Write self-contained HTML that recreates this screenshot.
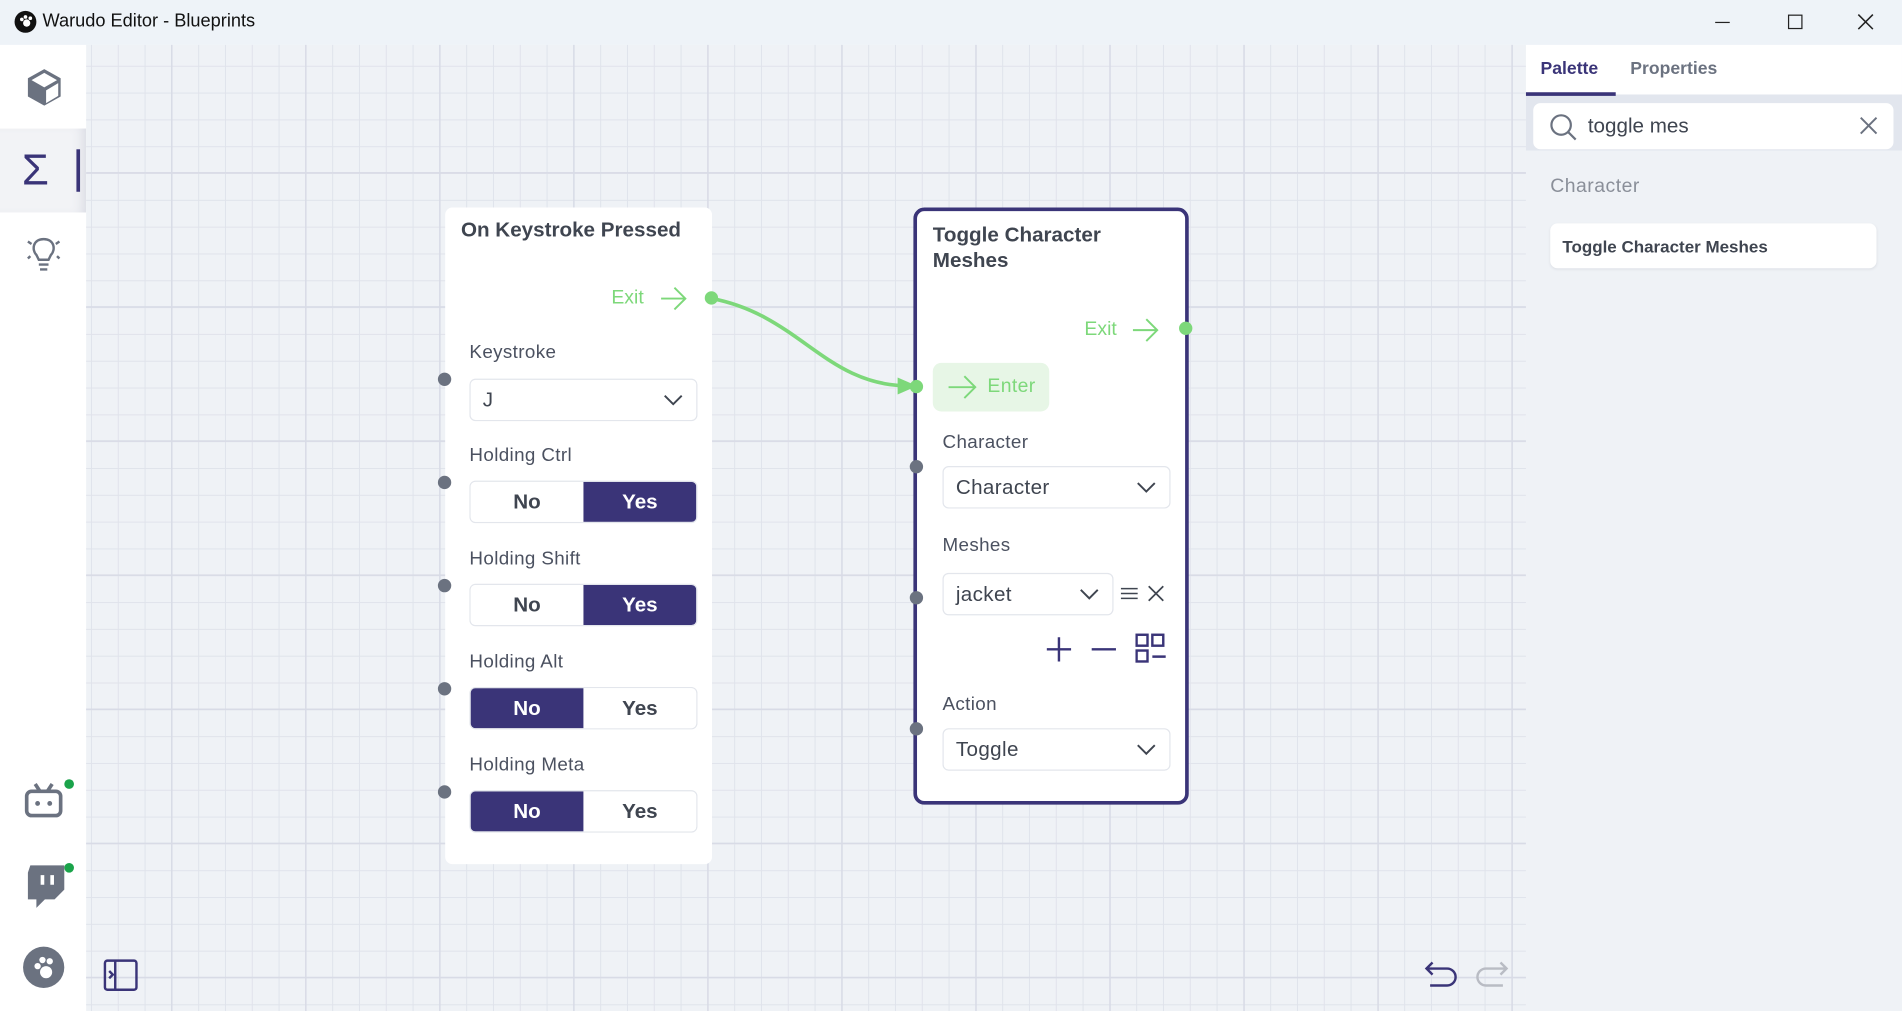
<!DOCTYPE html>
<html><head><meta charset="utf-8"><style>
*{box-sizing:border-box;margin:0;padding:0}
html,body{width:1902px;height:1011px;overflow:hidden;background:#fff}
#w{position:absolute;left:0;top:0;width:1568px;height:833px;transform:scale(1.2130,1.2137);transform-origin:0 0;font-family:"Liberation Sans",sans-serif;color:#3f4550}
.a{position:absolute}
#title{left:0;top:0;width:1568px;height:37px;background:#eef3f8}
#side{left:0;top:37px;width:71px;height:796px;background:#fff}
#canvas{left:71px;top:37px;width:1187px;height:796px;background-color:#eff2f6;
background-image:linear-gradient(90deg,#d8dbe6 1.2px,transparent 1.2px),linear-gradient(0deg,#d8dbe6 1.2px,transparent 1.2px),linear-gradient(90deg,#e0e3eb 1px,transparent 1px),linear-gradient(0deg,#e0e3eb 1px,transparent 1px);
background-size:110.5px 110.5px,110.5px 110.5px,22.1px 22.1px,22.1px 22.1px;background-position:70px 106px,70px 106px,4px 18px,4px 18px}
#panel{left:1258px;top:37px;width:310px;height:796px;background:#eff2f6}
.node{background:#fff;border-radius:6px}
.lbl{font-size:15.5px;color:#4b5160;letter-spacing:.3px}
.dd{background:#fff;border:1px solid #e3e6ec;border-radius:5px;font-size:17px;color:#3f4550;padding-left:10px;display:flex;align-items:center;letter-spacing:.3px}
.tg{display:flex;border:1px solid #e3e6ec;border-radius:5px;overflow:hidden;width:188px;height:35px}
.tg div{flex:1;display:flex;align-items:center;justify-content:center;font-weight:bold;font-size:17px;color:#3f4550;background:#fff}
.tg .on{background:#3a3478;color:#fff}
.dot{width:11px;height:11px;border-radius:50%;background:#6b7280}
.gdot{background:#7dd87a}
.green{color:#7dd87a}
</style></head><body><div id="w">
<div class="a" id="title">
<svg class="a" style="left:11px;top:8px" width="20" height="20" viewBox="0 0 20 20"><circle cx="10" cy="10" r="9" fill="#111"/><circle cx="11" cy="11" r="3" fill="#fff"/><circle cx="7" cy="8" r="1.5" fill="#fff"/><circle cx="10" cy="6" r="1.5" fill="#fff"/><circle cx="14" cy="7" r="1.5" fill="#fff"/></svg>
<div class="a" style="left:35px;top:9px;font-size:15px;color:#111">Warudo Editor - Blueprints</div>
<div class="a" style="left:1414px;top:18px;width:12px;height:1px;background:#222"></div>
<div class="a" style="left:1474px;top:12px;width:12px;height:12px;border:1.3px solid #222"></div>
<svg class="a" style="left:1531px;top:11px" width="14" height="14"><path d="M1 1L13 13M13 1L1 13" stroke="#222" stroke-width="1.3"/></svg>
</div>
<div class="a" id="side">
<svg class="a" style="left:21px;top:18px" width="31" height="34" viewBox="0 0 31 34"><path d="M15.5 2L29 9.5V24.5L15.5 32L2 24.5V9.5Z" fill="#6b7280"/><path d="M15.5 5L26 11L15.5 17L5 11Z M17 19.5L27 13.5V24L17 30Z" fill="#fff"/></svg>
<div class="a" style="left:0;top:69px;width:71px;height:69px;background:#f2f3f6;box-shadow:inset -8px 0 10px -6px #d5d7e0"></div>
<div class="a" style="left:18px;top:83px;font-size:36px;color:#3a3478;line-height:40px">Σ</div>
<div class="a" style="left:63px;top:86px;width:3px;height:35px;background:#3a3478"></div>
<svg class="a" style="left:20px;top:154px" width="32" height="34" viewBox="0 0 32 34"><path d="M10 19C6 15 7 6 16 6S26 15 22 19L20 23H12Z" fill="none" stroke="#6b7280" stroke-width="2"/><path d="M12 27H20M13 31H19M3 8L6 10M29 8L26 10M3 22L5 20M29 22L27 20" stroke="#6b7280" stroke-width="2"/></svg>
<svg class="a" style="left:20px;top:607px" width="34" height="30" viewBox="0 0 34 30"><rect x="2" y="8" width="28" height="20" rx="4" fill="none" stroke="#6b7280" stroke-width="3"/><path d="M9 2L13 8M23 2L19 8" stroke="#6b7280" stroke-width="3"/><circle cx="11" cy="18" r="2" fill="#6b7280"/><circle cx="21" cy="18" r="2" fill="#6b7280"/></svg>
<div class="a" style="left:53px;top:605px;width:8px;height:8px;border-radius:50%;background:#1aa34a"></div>
<svg class="a" style="left:21px;top:674px" width="34" height="40" viewBox="0 0 34 40"><path d="M4 2H32V22L24 30H16L9 37V30H2V8Z" fill="#6b7280"/><path d="M14 10V18M22 10V18" stroke="#fff" stroke-width="3"/></svg>
<div class="a" style="left:53px;top:674px;width:8px;height:8px;border-radius:50%;background:#1aa34a"></div>
<svg class="a" style="left:18px;top:742px" width="36" height="36" viewBox="0 0 36 36"><circle cx="18" cy="18" r="17" fill="#6b7280"/><circle cx="20" cy="22" r="5" fill="#fff"/><circle cx="13" cy="17" r="2.6" fill="#fff"/><circle cx="17" cy="12" r="2.6" fill="#fff"/><circle cx="23" cy="13" r="2.6" fill="#fff"/></svg>
</div>
<div class="a" id="canvas"></div>
<svg class="a" style="left:85px;top:790px" width="30" height="28" viewBox="0 0 30 28"><rect x="1.5" y="1.5" width="26" height="24" rx="2" fill="none" stroke="#3a3478" stroke-width="2"/><path d="M10 2V26M5 10L8 13L5 16" fill="none" stroke="#3a3478" stroke-width="2"/></svg>
<svg class="a" style="left:1173px;top:790px" width="30" height="26" viewBox="0 0 30 26"><path d="M8 3L3 8L8 13M3 8H20A6 6 0 0 1 20 22H6" fill="none" stroke="#3a3478" stroke-width="2"/></svg>
<svg class="a" style="left:1215px;top:790px" width="30" height="26" viewBox="0 0 30 26"><path d="M22 3L27 8L22 13M27 8H10A6 6 0 0 0 10 22H24" fill="none" stroke="#b9bcc4" stroke-width="2"/></svg>

<svg class="a" style="left:0;top:0" width="1258" height="833"><path d="M587 246C660 260 680 318 750 318" fill="none" stroke="#7dd87a" stroke-width="3"/><path d="M740 311L756 318L740 325Z" fill="#7dd87a"/></svg>

<div class="a node" style="left:367px;top:171px;width:220px;height:541px">
<div class="a" style="left:13px;top:9px;font-size:17px;font-weight:bold;color:#3f4550">On Keystroke Pressed</div>
<div class="a green" style="left:137px;top:66px;font-size:16px">Exit</div>
<svg class="a" style="left:176px;top:64px" width="24" height="22"><path d="M2 11H22M13 2L22 11L13 20" fill="none" stroke="#7dd87a" stroke-width="1.6"/></svg>
<div class="a lbl" style="left:20px;top:111px">Keystroke</div>
<div class="a dd" style="left:20px;top:141px;width:188px;height:35px">J<svg class="a" style="right:10px;top:11px" width="18" height="12"><path d="M2 2L9 9L16 2" fill="none" stroke="#3f4550" stroke-width="1.6"/></svg></div>
<div class="a lbl" style="left:20px;top:196px">Holding Ctrl</div>
<div class="a tg" style="left:20px;top:225px"><div>No</div><div class="on">Yes</div></div>
<div class="a lbl" style="left:20px;top:281px">Holding Shift</div>
<div class="a tg" style="left:20px;top:310px"><div>No</div><div class="on">Yes</div></div>
<div class="a lbl" style="left:20px;top:366px">Holding Alt</div>
<div class="a tg" style="left:20px;top:395px"><div class="on">No</div><div>Yes</div></div>
<div class="a lbl" style="left:20px;top:451px">Holding Meta</div>
<div class="a tg" style="left:20px;top:480px"><div class="on">No</div><div>Yes</div></div>
</div>
<div class="a dot gdot" style="left:581px;top:240px"></div>
<div class="a dot" style="left:361px;top:307px"></div>
<div class="a dot" style="left:361px;top:392px"></div>
<div class="a dot" style="left:361px;top:477px"></div>
<div class="a dot" style="left:361px;top:562px"></div>
<div class="a dot" style="left:361px;top:647px"></div>

<div class="a node" style="left:753px;top:171px;width:227px;height:492px;border:3px solid #3a3478;border-radius:9px">
<div class="a" style="left:13px;top:9px;font-size:17px;font-weight:bold;color:#3f4550;line-height:21px">Toggle Character<br>Meshes</div>
<div class="a green" style="left:138px;top:89px;font-size:16px">Exit</div>
<svg class="a" style="left:176px;top:87px" width="24" height="22"><path d="M2 11H22M13 2L22 11L13 20" fill="none" stroke="#7dd87a" stroke-width="1.6"/></svg>
<div class="a" style="left:13px;top:125px;width:96px;height:40px;background:#e7f6e6;border-radius:7px"></div>
<svg class="a" style="left:24px;top:134px" width="26" height="22"><path d="M2 11H24M15 2L24 11L15 20" fill="none" stroke="#7dd87a" stroke-width="1.6"/></svg>
<div class="a green" style="left:58px;top:136px;font-size:16px;letter-spacing:.3px">Enter</div>
<div class="a lbl" style="left:21px;top:182px">Character</div>
<div class="a dd" style="left:21px;top:210px;width:188px;height:35px">Character<svg class="a" style="right:10px;top:11px" width="18" height="12"><path d="M2 2L9 9L16 2" fill="none" stroke="#3f4550" stroke-width="1.6"/></svg></div>
<div class="a lbl" style="left:21px;top:267px">Meshes</div>
<div class="a dd" style="left:21px;top:298px;width:141px;height:35px">jacket<svg class="a" style="right:10px;top:11px" width="18" height="12"><path d="M2 2L9 9L16 2" fill="none" stroke="#3f4550" stroke-width="1.6"/></svg></div>
<svg class="a" style="left:168px;top:308px" width="14" height="14"><path d="M0 3H14M0 7H14M0 11H14" stroke="#3f4550" stroke-width="1.2"/></svg>
<svg class="a" style="left:190px;top:308px" width="14" height="14"><path d="M1 1L13 13M13 1L1 13" stroke="#3f4550" stroke-width="1.4"/></svg>
<svg class="a" style="left:106px;top:350px" width="22" height="22"><path d="M11 1V21M1 11H21" stroke="#3a3478" stroke-width="2"/></svg>
<svg class="a" style="left:143px;top:350px" width="22" height="22"><path d="M1 11H21" stroke="#3a3478" stroke-width="2"/></svg>
<svg class="a" style="left:180px;top:348px" width="26" height="26"><rect x="1" y="1" width="9" height="9" fill="none" stroke="#3a3478" stroke-width="2"/><rect x="14" y="1" width="9" height="9" fill="none" stroke="#3a3478" stroke-width="2"/><rect x="1" y="14" width="9" height="9" fill="none" stroke="#3a3478" stroke-width="2"/><path d="M14 19H25" stroke="#3a3478" stroke-width="2"/></svg>
<div class="a lbl" style="left:21px;top:398px">Action</div>
<div class="a dd" style="left:21px;top:426px;width:188px;height:35px">Toggle<svg class="a" style="right:10px;top:11px" width="18" height="12"><path d="M2 2L9 9L16 2" fill="none" stroke="#3f4550" stroke-width="1.6"/></svg></div>
</div>
<div class="a dot gdot" style="left:972px;top:265px"></div>
<div class="a dot gdot" style="left:750px;top:313px"></div>
<div class="a dot" style="left:750px;top:379px"></div>
<div class="a dot" style="left:750px;top:487px"></div>
<div class="a dot" style="left:750px;top:595px"></div>

<div class="a" id="panel">
<div class="a" style="left:0;top:0;width:310px;height:87px;background:linear-gradient(#fff 0,#fff 41px,#e2e6ee 41px)"></div>
<div class="a" style="left:12px;top:12px;font-size:14.5px;font-weight:bold;color:#3a3478">Palette</div>
<div class="a" style="left:0;top:39px;width:74px;height:3px;background:#3a3478"></div>
<div class="a" style="left:86px;top:12px;font-size:14.5px;font-weight:bold;color:#6b7280">Properties</div>
<div class="a" style="left:6px;top:48px;width:297px;height:38px;background:#fff;border-radius:6px"></div>
<svg class="a" style="left:19px;top:56px" width="24" height="24"><circle cx="10" cy="10" r="8" fill="none" stroke="#6b7280" stroke-width="1.8"/><path d="M16 16L22 22" stroke="#6b7280" stroke-width="1.8"/></svg>
<div class="a" style="left:51px;top:57px;font-size:17px;color:#3f4550">toggle mes</div>
<svg class="a" style="left:275px;top:59px" width="15" height="15"><path d="M1 1L14 14M14 1L1 14" stroke="#6b7280" stroke-width="1.6"/></svg>
<div class="a" style="left:20px;top:108px;font-size:16px;color:#8a8f99;letter-spacing:.4px">Character</div>
<div class="a" style="left:20px;top:147px;width:269px;height:37px;background:#fff;border-radius:6px;box-shadow:0 1px 2px #dde0e6"></div>
<div class="a" style="left:30px;top:158px;font-size:14px;font-weight:bold;color:#3f4550">Toggle Character Meshes</div>
</div>
</div></body></html>
